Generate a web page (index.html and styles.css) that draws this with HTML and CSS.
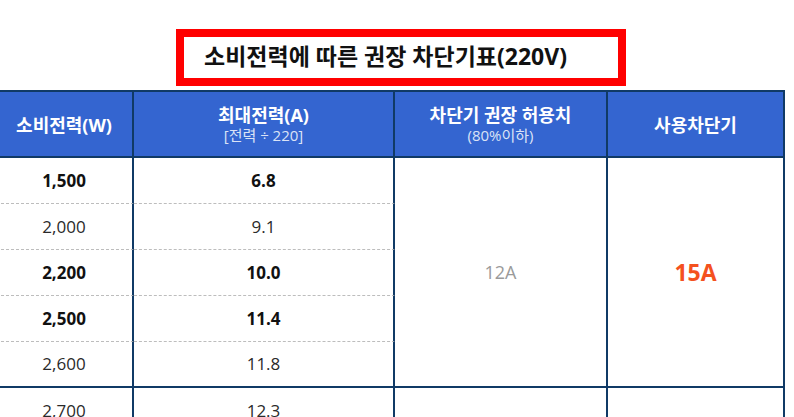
FILE: index.html
```html
<!DOCTYPE html>
<html lang="ko">
<head>
<meta charset="utf-8">
<title>소비전력에 따른 권장 차단기표</title>
<link rel="stylesheet" href="styles.css">
</head>
<body>
<div class="title-wrap">
  <h1 class="title">소비전력에 따른 권장 차단기표(220V)</h1>
</div>
<table class="breaker">
  <colgroup>
    <col class="c1"><col class="c2"><col class="c3"><col class="c4">
  </colgroup>
  <thead>
    <tr>
      <th>소비전력(W)</th>
      <th><span class="main">최대전력(A)</span><span class="sub">[전력 ÷ 220]</span></th>
      <th><span class="main">차단기 권장 허용치</span><span class="sub">(80%이하)</span></th>
      <th>사용차단기</th>
    </tr>
  </thead>
  <tbody>
    <tr>
      <td class="strong">1,500</td>
      <td class="strong">6.8</td>
      <td class="range" rowspan="5">12A</td>
      <td class="use" rowspan="5">15A</td>
    </tr>
    <tr><td>2,000</td><td>9.1</td></tr>
    <tr><td class="strong">2,200</td><td class="strong">10.0</td></tr>
    <tr><td class="strong">2,500</td><td class="strong">11.4</td></tr>
    <tr class="last"><td>2,600</td><td>11.8</td></tr>
    <tr>
      <td>2,700</td>
      <td>12.3</td>
      <td class="range"></td>
      <td class="use"></td>
    </tr>
  </tbody>
</table>
</body>
</html>
```
FILE: styles.css
```css
html, body {
  margin: 0;
  padding: 0;
  background: #ffffff;
  overflow: hidden;
}
body {
  font-family: "Open Sans", "Noto Sans CJK KR", sans-serif;
  color: #222;
}
.title-wrap {
  display: flex;
  justify-content: center;
  padding: 29px 0 0 8px;
  margin-bottom: 4px;
}
.title {
  box-sizing: border-box;
  width: 450px;
  height: 57px;
  margin: 0;
  border: 8px solid #ff0000;
  padding: 0 0 3px 20px;
  font-size: 23px;
  font-weight: 700;
  line-height: 38px;
  color: #111;
  white-space: nowrap;
}
.breaker {
  border-collapse: separate;
  border-spacing: 0;
  table-layout: fixed;
  width: 791px;
  margin-left: -6px;
  border-top: 2px solid #103a66;
  border-left: 2px solid #103a66;
}
.c1 { width: 138px; }
.c2 { width: 261px; }
.c3 { width: 213px; }
.c4 { width: 177px; }
.breaker th {
  height: 64px;
  padding: 0;
  background: #3465d0;
  color: #ffffff;
  font-size: 18px;
  font-weight: 700;
  text-align: center;
  vertical-align: middle;
  border-right: 2px solid #103a66;
  border-bottom: 2px solid #103a66;
}
.breaker th .main {
  display: block;
  line-height: 22px;
}
.breaker th .sub {
  display: block;
  font-size: 15px;
  font-weight: 400;
  line-height: 18px;
  color: #dbe3f6;
}
.breaker td {
  height: 45px;
  padding: 0;
  font-size: 17px;
  line-height: 20px;
  text-align: center;
  vertical-align: middle;
  color: #2a2a2a;
  border-right: 2px solid #103a66;
  border-bottom: 1px dashed #bdbdbd;
}
.breaker td.strong {
  font-weight: 700;
  color: #111;
}
.breaker tr.last td {
  height: 44px;
  border-bottom: 2px solid #103a66;
}
.breaker td.range {
  color: #9a9a9a;
  font-size: 18px;
  border-bottom: 2px solid #103a66;
}
.breaker td.use {
  color: #f4511e;
  font-size: 23px;
  font-weight: 700;
  border-bottom: 2px solid #103a66;
}
```
